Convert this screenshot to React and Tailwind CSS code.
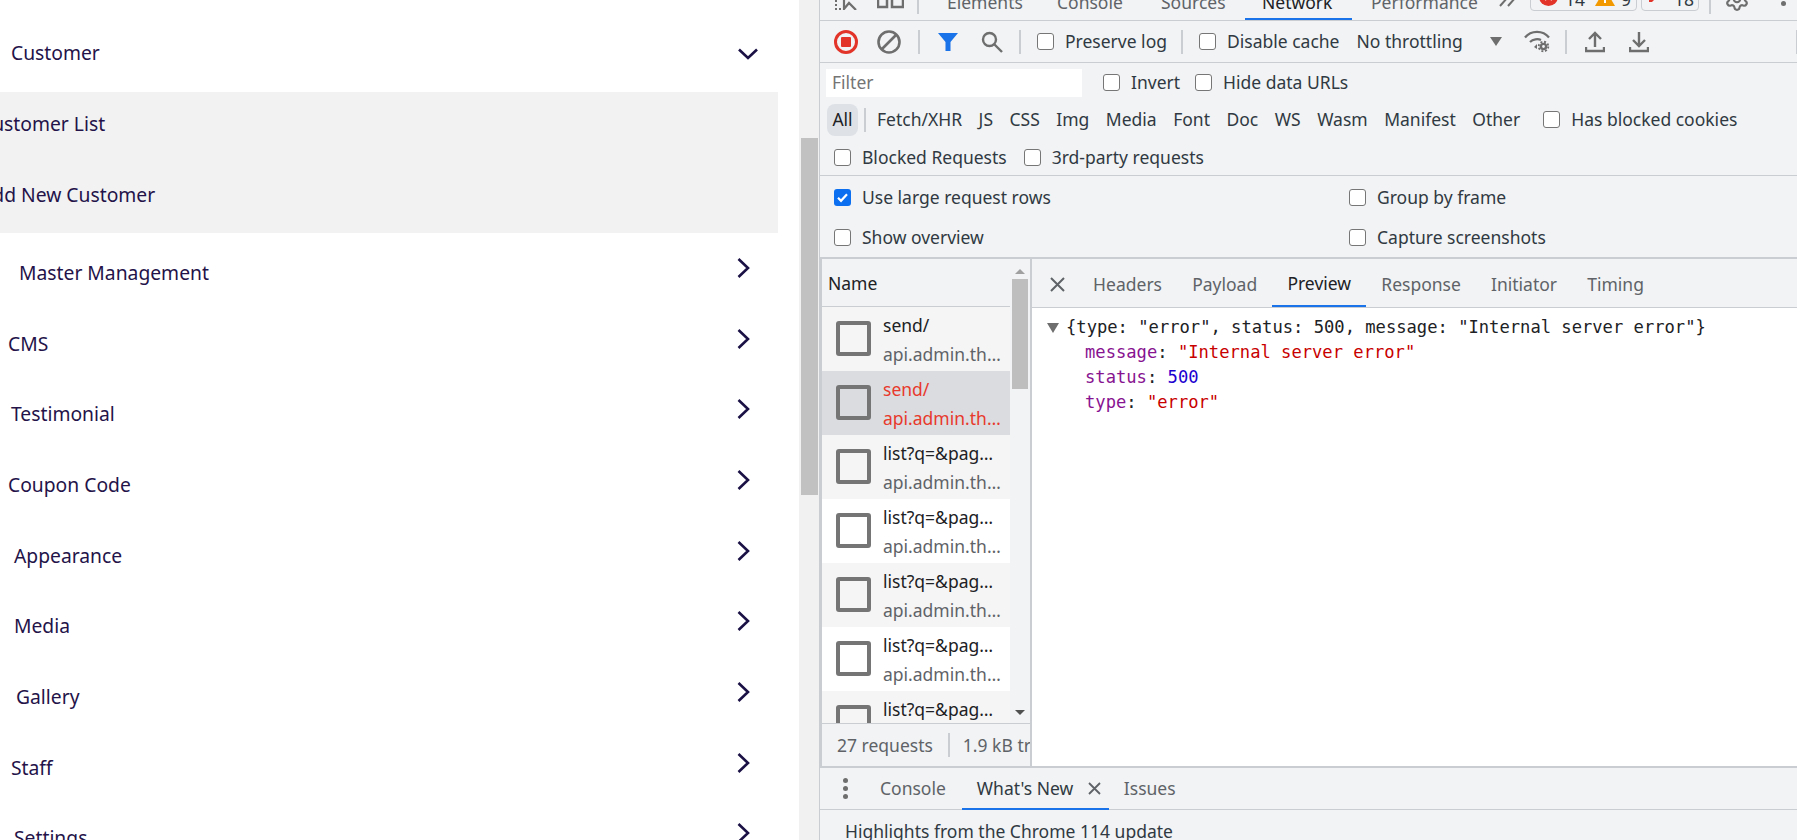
import { Settings as Gear } from 'lucide-react';

const ui = { fontFamily: '"Noto Sans", sans-serif' };

const menu = [
  { label: 'Master Management', pad: 'pl-[19px]' },
  { label: 'CMS', pad: 'pl-[8px]' },
  { label: 'Testimonial', pad: 'pl-[11px]' },
  { label: 'Coupon Code', pad: 'pl-[8px]' },
  { label: 'Appearance', pad: 'pl-[14px]' },
  { label: 'Media', pad: 'pl-[14px]' },
  { label: 'Gallery', pad: 'pl-[16px]' },
  { label: 'Staff', pad: 'pl-[11px]' },
  { label: 'Settings', pad: 'pl-[14px]' },
];

const requests = [
  { name: 'send/', bg: 'bg-[#f5f5f5]' },
  { name: 'send/', bg: 'bg-[#dadce0]', failed: true },
  { name: 'list?q=&pag…', bg: 'bg-[#f5f5f5]' },
  { name: 'list?q=&pag…', bg: 'bg-white' },
  { name: 'list?q=&pag…', bg: 'bg-[#f5f5f5]' },
  { name: 'list?q=&pag…', bg: 'bg-white' },
  { name: 'list?q=&pag…', bg: 'bg-[#f5f5f5]' },
];

const filters = ['Fetch/XHR', 'JS', 'CSS', 'Img', 'Media', 'Font', 'Doc', 'WS', 'Wasm', 'Manifest', 'Other'];

function Check({ label, checked, className = '' }) {
  return (
    <div className={`flex items-center gap-[11px] shrink-0 ${className}`}>
      {checked ? (
        <span className="w-[17px] h-[17px] rounded-[3px] bg-[#0b6ff0] flex items-center justify-center">
          <svg width="13" height="13" viewBox="0 0 13 13"><path d="M2 6.8l3 3L11 3.2" fill="none" stroke="#fff" strokeWidth="2.2" /></svg>
        </span>
      ) : (
        <span className="w-[17px] h-[17px] rounded-[3px] border-[1.5px] border-[#767676] bg-white" />
      )}
      <span className="text-[#303942]">{label}</span>
    </div>
  );
}

function Sep({ className = '' }) {
  return <span className={`w-[2px] h-[24px] bg-[#cacdd1] shrink-0 ${className}`} />;
}

function Sidebar() {
  return (
    <div className="w-[799px] h-[840px] shrink-0 bg-white overflow-hidden text-[19.3px] text-[#241349] pt-[18px]" style={ui}>
      <div className="h-[71px] pl-[11px] pr-[20px] flex items-center justify-between w-[778px]">
        <span>Customer</span>
        <svg width="20" height="12" viewBox="0 0 20 12" fill="none" stroke="#1b1145" strokeWidth="2.6"><path d="M1 1.5l9 8.5 9-8.5" /></svg>
      </div>
      <div className="mt-[3px] w-[778px] h-[141px] bg-[#f2f2f2] flex flex-col">
        <div className="h-[71px] shrink-0 -mt-[3px] flex items-center -ml-[20px]"><span>Customer List</span></div>
        <div className="h-[71px] shrink-0 flex items-center -ml-[20px]"><span>Add New Customer</span></div>
      </div>
      <div className="mt-[5px]">
        {menu.map((m) => (
          <div key={m.label} className={`h-[70.7px] flex items-center justify-between w-[778px] pr-[28px] ${m.pad}`}>
            <span>{m.label}</span>
            <svg className="-mt-[11px]" width="13" height="20" viewBox="0 0 13 20" fill="none" stroke="#1b1145" strokeWidth="2.6"><path d="M1.5 1l9.5 9-9.5 9" /></svg>
          </div>
        ))}
      </div>
    </div>
  );
}

function TopTabs() {
  return (
    <div className="h-[21px] border-b border-[#cacdd1] flex items-end overflow-hidden relative text-[#5f6368]">
      <div className="flex items-center h-[42px] w-full shrink-0 -mb-[3px]">
        <svg className="ml-[14px] shrink-0 -translate-y-[4px]" width="24" height="24" viewBox="0 0 24 24" fill="none" stroke="#6e6e6e" strokeWidth="2.2"><path d="M10 8V23L15 17L22 24M1 15h2M1 19h2M1 23h2M5 23h2" /></svg>
        <svg className="ml-[19px] shrink-0 -translate-y-[5px]" width="27" height="24" viewBox="0 0 27 24" fill="none" stroke="#6e6e6e" strokeWidth="2.5"><path d="M1 10h9v12H1zM15 2h11v20H15z" /></svg>
        <Sep className="ml-[13px]" />
        <span className="ml-[28px] w-[73px]">Elements</span>
        <span className="ml-[37px] w-[66px]">Console</span>
        <span className="ml-[38px] w-[63px]">Sources</span>
        <span className="ml-[38px] w-[71px] text-[#202124]">Network</span>
        <span className="ml-[38px] w-[103px]">Performance</span>
        <svg className="ml-[25px] shrink-0 -translate-y-[2px]" width="18" height="14" viewBox="0 0 18 14" fill="none" stroke="#6e6e6e" strokeWidth="2"><path d="M1 13L9 4M9 13L17 4" /></svg>
        <div className="ml-[13px] w-[107px] h-[18px] shrink-0 border border-[#cacdd1] rounded-[4px] flex items-center relative">
          <svg className="absolute left-[8px] top-[-7px]" width="19" height="19" viewBox="0 0 19 19"><circle cx="9.5" cy="9.5" r="9.5" fill="#e3342a" /><path d="M6 6l7 7M13 6l-7 7" stroke="#fff" strokeWidth="2" /></svg>
          <span className="absolute left-[34px] top-[-8px] text-[#303942]">14</span>
          <svg className="absolute left-[64px] top-[-3px]" width="20" height="15" viewBox="0 0 20 15"><path d="M10 -2L20 15H0z" fill="#f29900" /><path d="M10 8v4" stroke="#fff" strokeWidth="2" /></svg>
          <span className="absolute left-[90px] top-[-8px] text-[#303942]">9</span>
        </div>
        <div className="ml-[4px] w-[58px] h-[18px] shrink-0 border border-[#cacdd1] rounded-[4px] flex items-center relative">
          <svg className="absolute left-[7px] top-[-1px]" width="18" height="12" viewBox="0 0 18 12"><path d="M0 0h18v6H6l-3 3H0z" fill="#e3342a" /></svg>
          <span className="absolute left-[32px] top-[-8px] text-[#303942]">18</span>
        </div>
        <Sep className="ml-[10px]" />
        <Gear className="ml-[13px] shrink-0 -translate-y-[3px] text-[#6e6e6e]" size={26} strokeWidth={2} />
        <div className="ml-[31px] w-[5px] flex flex-col gap-[3px] -translate-y-[3px]">
          <span className="w-[5px] h-[5px] rounded-full bg-[#6e6e6e]" />
          <span className="w-[5px] h-[5px] rounded-full bg-[#6e6e6e]" />
        </div>
      </div>
      <div className="absolute left-[425px] bottom-0 w-[107px] h-[2px] bg-[#1a73e8]" />
    </div>
  );
}

function Toolbar() {
  return (
    <div className="h-[42px] border-b border-[#cacdd1] flex items-center text-[#303942]">
      <svg className="ml-[13px] shrink-0" width="26" height="26" viewBox="0 0 26 26"><circle cx="13" cy="13" r="10.5" fill="none" stroke="#e3342a" strokeWidth="3" /><rect x="8" y="8" width="10" height="10" rx="1" fill="#e3342a" /></svg>
      <svg className="ml-[17px] shrink-0" width="26" height="26" viewBox="0 0 26 26" fill="none" stroke="#6e6e6e" strokeWidth="2.6"><circle cx="13" cy="13" r="10.5" /><path d="M6 20L20 6" /></svg>
      <Sep className="ml-[16px]" />
      <svg className="ml-[17px] shrink-0" width="22" height="22" viewBox="0 0 22 22"><path d="M1 2h20l-7.5 9v9h-5v-9z" fill="#1a73e8" /></svg>
      <svg className="ml-[21px] shrink-0" width="24" height="24" viewBox="0 0 24 24" fill="none" stroke="#6e6e6e" strokeWidth="2.4"><circle cx="9.5" cy="9.5" r="6.5" /><path d="M14.5 14.5L22 22" /></svg>
      <Sep className="ml-[15px]" />
      <Check label="Preserve log" className="ml-[16px]" />
      <Sep className="ml-[14px]" />
      <Check label="Disable cache" className="ml-[16px]" />
      <span className="ml-[17px] w-[107px] shrink-0">No throttling</span>
      <span className="ml-[26px] w-0 h-0 border-x-[6px] border-x-transparent border-t-[9px] border-t-[#6e6e6e]" />
      <svg className="ml-[22px] shrink-0" width="27" height="23" viewBox="0 0 27 23" fill="none" stroke="#6e6e6e" strokeWidth="2.2">
        <path d="M1 7.5C7 0 19 0 25 7.5M6 12c3-3 8-3.5 11-2" />
        <path d="M13 14l-3 3 3 2z" fill="#6e6e6e" stroke="none" />
        <circle cx="19.5" cy="16.5" r="2.6" strokeWidth="2.4" />
        <circle cx="19.5" cy="16.5" r="4.8" strokeWidth="1.8" strokeDasharray="2 1.77" />
      </svg>
      <Sep className="ml-[14px]" />
      <svg className="ml-[18px] shrink-0" width="20" height="22" viewBox="0 0 20 22" fill="none" stroke="#6e6e6e" strokeWidth="2.4"><path d="M10 16V2M4 8l6-6 6 6M1 16v4h18v-4" /></svg>
      <svg className="ml-[24px] shrink-0" width="20" height="22" viewBox="0 0 20 22" fill="none" stroke="#6e6e6e" strokeWidth="2.4"><path d="M10 1v14M4 9l6 6 6-6M1 16v4h18v-4" /></svg>
      <Sep className="ml-[147px]" />
    </div>
  );
}

function Filters() {
  return (
    <div className="h-[113px] border-b border-[#cacdd1] text-[#303942]">
      <div className="h-[39px] flex items-center pl-[6px]">
        <div className="w-[256px] h-[28px] bg-white text-[#757575] pl-[6px] leading-[27px]">Filter</div>
        <Check label="Invert" className="ml-[21px]" />
        <Check label="Hide data URLs" className="ml-[15px]" />
      </div>
      <div className="h-[33px] mt-[1px] flex items-center pl-[7px]">
        <span className="w-[31px] h-[32px] rounded-[8px] bg-[#dee1e6] flex items-center justify-center text-[#202124]">All</span>
        <Sep className="ml-[6px] mr-[11px]" />
        <div className="flex gap-[16.5px] text-[#303942]">
          {filters.map((f) => <span key={f}>{f}</span>)}
        </div>
        <Check label="Has blocked cookies" className="ml-[23px]" />
      </div>
      <div className="h-[40px] pt-[2px] flex items-center pl-[14px] gap-[17px]">
        <Check label="Blocked Requests" />
        <Check label="3rd-party requests" />
      </div>
    </div>
  );
}

function Settings() {
  return (
    <div className="h-[83px] border-b-2 border-[#cacdd1] grid grid-cols-[515px_1fr] grid-rows-2 items-center pl-[14px] pt-[1px]">
      <Check label="Use large request rows" checked />
      <Check label="Group by frame" />
      <Check label="Show overview" />
      <Check label="Capture screenshots" />
    </div>
  );
}

function RequestList() {
  return (
    <div className="w-[212px] shrink-0 flex flex-col border-x-2 border-[#cacdd1]">
      <div className="flex-1 flex min-h-0">
        <div className="w-[188px] shrink-0 flex flex-col overflow-hidden">
          <div className="h-[48px] shrink-0 flex items-center pl-[6px] pt-[2px] border-b border-[#cacdd1] text-[#202124]">Name</div>
          {requests.map((r, i) => (
            <div key={i} className={`h-[64px] shrink-0 flex items-start pl-[14px] ${r.bg}`}>
              <span className="w-[35px] h-[35px] mt-[14px] shrink-0 rounded-[3px] border-4 border-[#757575]" />
              <div className={`ml-[12px] leading-[29px] pt-[4px] whitespace-nowrap ${r.failed ? 'text-[#e8392c]' : 'text-[#202124]'}`}>
                <div>{r.name}</div>
                <div className={r.failed ? '' : 'text-[#5f6368]'}>api.admin.th…</div>
              </div>
            </div>
          ))}
        </div>
        <div className="flex-1 flex flex-col items-center relative">
          <span className="mt-[10px] w-0 h-0 border-x-[5px] border-x-transparent border-b-[5px] border-b-[#a0a0a0]" />
          <span className="mt-[5px] w-[16px] h-[110px] bg-[#bebebe]" />
          <span className="absolute top-[451px] w-0 h-0 border-x-[5px] border-x-transparent border-t-[5px] border-t-[#505050]" />
        </div>
      </div>
      <div className="h-[43px] shrink-0 border-t border-[#cacdd1] flex items-center pl-[15px] text-[#5f6368] overflow-hidden whitespace-nowrap">
        <span>27 requests</span>
        <Sep className="ml-[15px] mr-[13px]" />
        <span>1.9 kB transferred</span>
      </div>
    </div>
  );
}

function Preview() {
  const tabs = ['Headers', 'Payload', 'Preview', 'Response', 'Initiator', 'Timing'];
  return (
    <div className="flex-1 flex flex-col min-w-0 bg-white">
      <div className="h-[49px] shrink-0 bg-[#f1f3f4] border-b border-[#cacdd1] flex items-stretch text-[#5f6368]">
        <svg className="ml-[18px] mt-[18px] shrink-0" width="15" height="15" viewBox="0 0 15 15" fill="none" stroke="#5f6368" strokeWidth="2"><path d="M1 1l13 13M14 1L1 14" /></svg>
        <div className="ml-[13px] flex">
          {tabs.map((t) => (
            <div key={t} className={`px-[15.1px] pt-[3px] flex items-center ${t === 'Preview' ? 'border-b-2 border-[#1a73e8] text-[#202124]' : ''}`}>{t}</div>
          ))}
        </div>
      </div>
      <div className="relative pt-[7px] text-[17.15px] leading-[25px] whitespace-pre pl-[34px] text-[#202124]" style={{ fontFamily: '"DejaVu Sans Mono", monospace' }}>
        <span className="absolute left-[15px] top-[15px] w-0 h-0 border-x-[6px] border-x-transparent border-t-[10px] border-t-[#6e6e6e]" />
        <div>{'{type: "error", status: 500, message: "Internal server error"}'}</div>
        <div className="pl-[19px]"><span className="text-[#881391]">message</span>: <span className="text-[#c80000]">"Internal server error"</span></div>
        <div className="pl-[19px]"><span className="text-[#881391]">status</span>: <span className="text-[#1c00cf]">500</span></div>
        <div className="pl-[19px]"><span className="text-[#881391]">type</span>: <span className="text-[#c80000]">"error"</span></div>
      </div>
    </div>
  );
}

function Drawer() {
  return (
    <div className="h-[74px] shrink-0 border-t-2 border-[#cacdd1]">
      <div className="h-[42px] border-b border-[#cacdd1] flex items-stretch text-[#5f6368]">
        <div className="ml-[23px] w-[6px] flex flex-col justify-center gap-[3px]">
          <span className="w-[5px] h-[5px] rounded-full bg-[#6e6e6e]" />
          <span className="w-[5px] h-[5px] rounded-full bg-[#6e6e6e]" />
          <span className="w-[5px] h-[5px] rounded-full bg-[#6e6e6e]" />
        </div>
        <span className="ml-[31px] flex items-center">Console</span>
        <div className="ml-[16px] w-[147px] pl-[15px] flex items-center border-b-2 border-[#1a73e8] -mb-px text-[#303942]">
          <span>What's New</span>
          <svg className="ml-[15px]" width="13" height="13" viewBox="0 0 13 13" fill="none" stroke="#5f6368" strokeWidth="1.8"><path d="M1 1l11 11M12 1L1 12" /></svg>
        </div>
        <span className="ml-[15px] flex items-center">Issues</span>
      </div>
      <div className="pl-[25px] pt-[8px] text-[#303942] whitespace-nowrap">Highlights from the Chrome 114 update</div>
    </div>
  );
}

export default function App() {
  return (
    <div className="w-[1797px] h-[840px] flex overflow-hidden bg-white">
      <Sidebar />
      <div className="w-[20px] shrink-0 bg-[#f1f1f1] pt-[138px] pl-[2px] flex">
        <div className="w-[17px] h-[357px] bg-[#c1c1c1]" />
      </div>
      <div className="flex-1 min-w-0 flex flex-col bg-[#f1f3f4] border-l border-[#cacdd1] text-[17.5px]" style={ui}>
        <TopTabs />
        <Toolbar />
        <Filters />
        <Settings />
        <div className="flex-1 min-h-0 flex">
          <RequestList />
          <Preview />
        </div>
        <Drawer />
      </div>
    </div>
  );
}
